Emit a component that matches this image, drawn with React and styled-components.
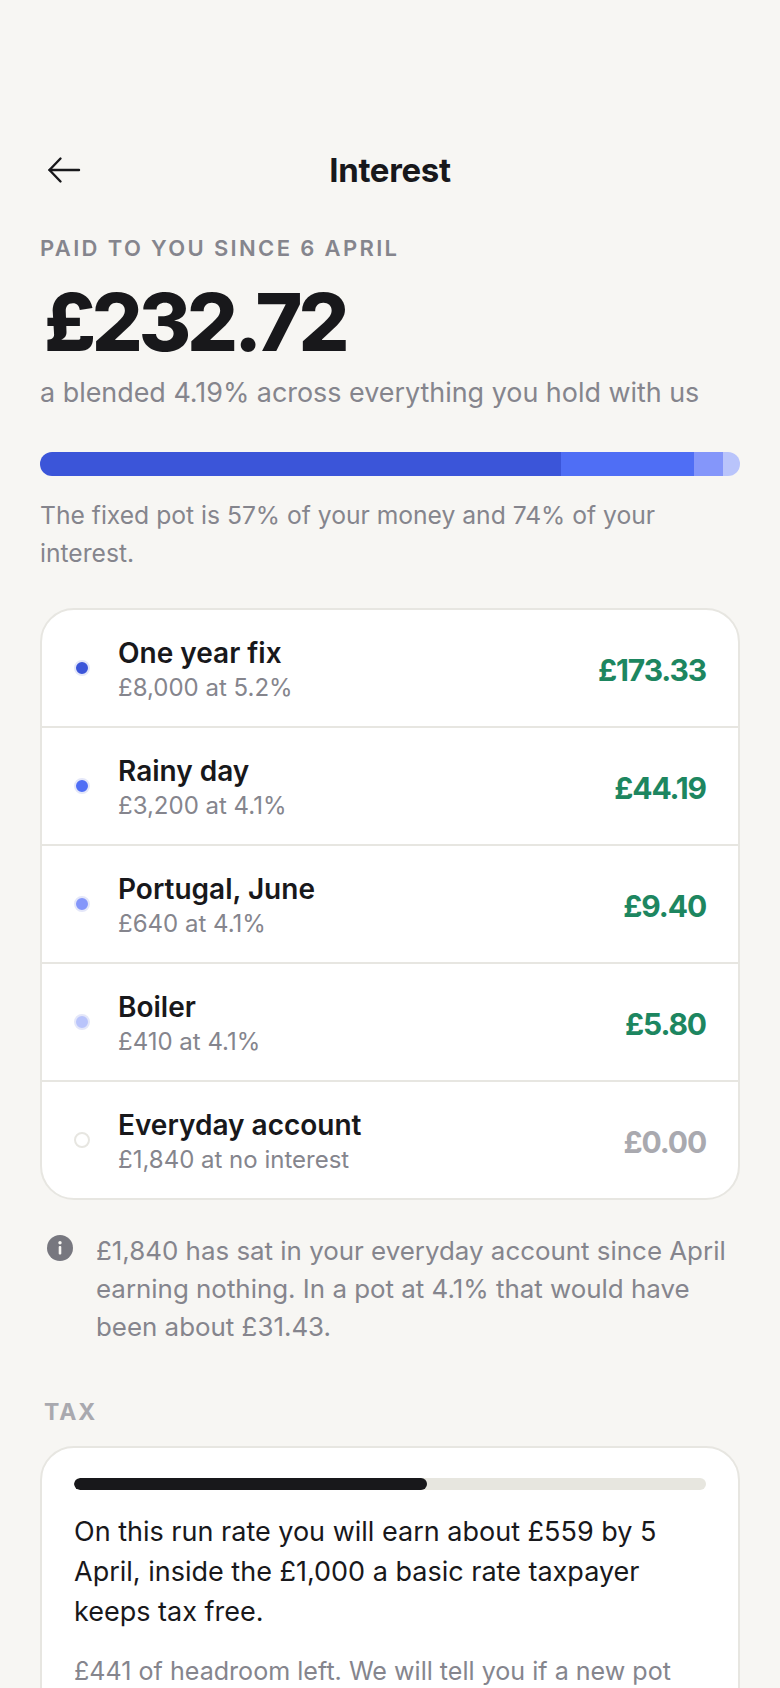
import React from "react";
import styled, { createGlobalStyle } from "styled-components";

const pots = [
  { name: "One year fix", detail: "£8,000 at 5.2%", amount: 173.33, color: "#3b55d9" },
  { name: "Rainy day", detail: "£3,200 at 4.1%", amount: 44.19, color: "#4f6ef5" },
  { name: "Portugal, June", detail: "£640 at 4.1%", amount: 9.4, color: "#8496fa" },
  { name: "Boiler", detail: "£410 at 4.1%", amount: 5.8, color: "#b9c4fb" },
  { name: "Everyday account", detail: "£1,840 at no interest", amount: 0, color: "#ffffff" },
];

const total = 232.72;

const App = () => {
  return (
    <>
      <GlobalStyle />
      <Page>
        <Header>
          <BackButton aria-label="Back">
            <svg width="36" height="28" viewBox="0 0 36 28" fill="none" stroke="#18181b" strokeWidth="2.4" strokeLinecap="round" strokeLinejoin="round">
              <path d="M3.5 14H33" />
              <path d="M14.5 2.5L3.5 14L14.5 25.5" />
            </svg>
          </BackButton>
          <Title>Interest</Title>
        </Header>

        <Eyebrow>PAID TO YOU SINCE 6 APRIL</Eyebrow>
        <Hero>£232.72</Hero>
        <Blended>a blended 4.19% across everything you hold with us</Blended>

        <SplitBar>
          {pots
            .filter((pot) => pot.amount > 0)
            .map((pot) => (
              <Segment
                key={pot.name}
                $color={pot.color}
                style={{ width: `${(pot.amount / total) * 100}%` }}
              />
            ))}
        </SplitBar>
        <Blurb>The fixed pot is 57% of your money and 74% of your interest.</Blurb>

        <PotCard>
          {pots.map((pot) => (
            <PotRow key={pot.name}>
              <Dot $color={pot.color} $empty={pot.amount === 0} />
              <PotText>
                <PotName>{pot.name}</PotName>
                <PotDetail>{pot.detail}</PotDetail>
              </PotText>
              <Amount $empty={pot.amount === 0}>£{pot.amount.toFixed(2)}</Amount>
            </PotRow>
          ))}
        </PotCard>

        <Note>
          <NoteIcon viewBox="0 0 26 26">
            <circle cx="13" cy="13" r="13" fill="#77777f" />
            <circle cx="13" cy="7.8" r="1.7" fill="#f7f6f3" />
            <rect x="11.7" y="11" width="2.6" height="8.4" rx="1" fill="#f7f6f3" />
          </NoteIcon>
          <NoteText>
            £1,840 has sat in your everyday account since April earning nothing.
            In a pot at 4.1% that would have been about £31.43.
          </NoteText>
        </Note>

        <SectionLabel>TAX</SectionLabel>
        <TaxCard>
          <Track>
            <Fill style={{ width: "55.9%" }} />
          </Track>
          <TaxText>
            On this run rate you will earn about £559 by 5 April, inside the
            £1,000 a basic rate taxpayer keeps tax free.
          </TaxText>
          <TaxNote>£441 of headroom left. We will tell you if a new pot</TaxNote>
        </TaxCard>
      </Page>
    </>
  );
};

const GlobalStyle = createGlobalStyle`
  html, body {
    margin: 0;
    padding: 0;
    height: 100%;
    overflow: hidden;
    background: #f7f6f3;
  }
  * {
    box-sizing: border-box;
  }
`;

const Page = styled.div`
  width: 780px;
  height: 1688px;
  overflow: hidden;
  padding: 146px 40px 0;
  background: #f7f6f3;
  color: #18181b;
  font-family: Inter, "Liberation Sans", sans-serif;
`;

const Header = styled.header`
  position: relative;
  height: 48px;
  display: flex;
  align-items: center;
  justify-content: center;
`;

const BackButton = styled.button`
  position: absolute;
  left: 6px;
  top: 10px;
  padding: 0;
  border: none;
  background: none;
  display: flex;
`;

const Title = styled.h1`
  margin: 0;
  font-size: 33px;
  font-weight: 700;
  letter-spacing: -0.01em;
`;

const Eyebrow = styled.div`
  margin-top: 40px;
  font-size: 22px;
  line-height: 28px;
  font-weight: 600;
  letter-spacing: 0.107em;
  color: #85858d;
`;

const Hero = styled.div`
  margin-top: 14px;
  padding-left: 4px;
  font-size: 80px;
  line-height: 92px;
  font-weight: 800;
  letter-spacing: -0.052em;
`;

const Blended = styled.p`
  margin: 5px 0 0;
  font-size: 26.9px;
  line-height: 38px;
  color: #85858d;
`;

const SplitBar = styled.div`
  margin-top: 41px;
  height: 24px;
  display: flex;
  border-radius: 12px;
  overflow: hidden;
`;

const Segment = styled.div`
  height: 100%;
  background: ${(props) => props.$color};
`;

const Blurb = styled.p`
  margin: 20px 0 0;
  font-size: 24.65px;
  line-height: 38px;
  color: #85858d;
`;

const PotCard = styled.section`
  margin-top: 36px;
  background: #fff;
  border: 2px solid #e7e6e1;
  border-radius: 34px;
  overflow: hidden;
`;

const PotRow = styled.div`
  height: 118px;
  padding: 0 32px 0 32px;
  display: flex;
  align-items: center;
  border-bottom: 2px solid #e7e6e1;
  &:last-child {
    height: 116px;
    border-bottom: none;
  }
`;

const Dot = styled.span`
  flex: none;
  width: 16px;
  height: 16px;
  border-radius: 50%;
  background: ${(props) => props.$color};
  border: 2px solid ${(props) => (props.$empty ? "#e7e6e1" : "#e4e7f9")};
`;

const PotText = styled.div`
  flex: 1;
  margin-left: 28px;
  margin-top: 1px;
`;

const PotName = styled.div`
  font-size: 28px;
  line-height: 36px;
  font-weight: 600;
`;

const PotDetail = styled.div`
  margin-top: 2px;
  font-size: 24px;
  line-height: 30px;
  color: #85858d;
`;

const Amount = styled.div`
  margin-top: 4px;
  font-size: 30px;
  font-weight: 700;
  letter-spacing: -0.037em;
  color: ${(props) => (props.$empty ? "#a9a9af" : "#1d8660")};
`;

const Note = styled.div`
  margin-top: 32px;
  padding-left: 7px;
  display: flex;
  gap: 23px;
`;

const NoteIcon = styled.svg`
  flex: none;
  width: 26px;
  height: 26px;
  margin-top: 3px;
`;

const NoteText = styled.p`
  margin: 0;
  font-size: 25.9px;
  line-height: 38px;
  color: #85858d;
`;

const SectionLabel = styled.div`
  margin-top: 51px;
  padding-left: 4px;
  font-size: 23px;
  line-height: 30px;
  font-weight: 700;
  letter-spacing: 0.08em;
  color: #a9a9af;
`;

const TaxCard = styled.section`
  margin-top: 19px;
  padding: 30px 32px;
  background: #fff;
  border: 2px solid #e7e6e1;
  border-radius: 34px;
`;

const Track = styled.div`
  height: 12px;
  border-radius: 6px;
  background: #e7e6df;
  overflow: hidden;
`;

const Fill = styled.div`
  height: 100%;
  border-radius: 6px;
  background: #18181b;
`;

const TaxText = styled.p`
  margin: 22px 0 0;
  font-size: 27px;
  line-height: 40px;
`;

const TaxNote = styled.p`
  margin: 20px 0 0;
  font-size: 25.1px;
  line-height: 38px;
  color: #85858d;
`;

export default App;
